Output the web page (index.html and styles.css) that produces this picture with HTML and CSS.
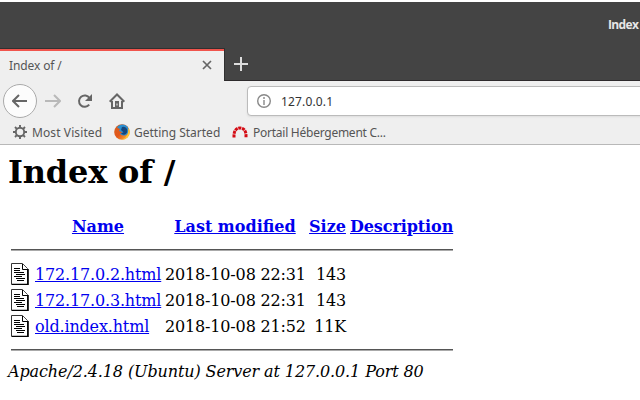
FILE: index.html
```html
<!DOCTYPE html>
<html lang="en">
<head>
<meta charset="utf-8">
<title>Index of /</title>
<link rel="stylesheet" href="styles.css">
</head>
<body>
<svg width="0" height="0" class="defs">
  <symbol id="doc" viewBox="0 0 20 22">
    <path d="M.5.5h11l5 5v16H.5z" fill="#fff" stroke="#333"/>
    <path d="M17 6v15.500H1" fill="none" stroke="#000" stroke-width="1.600"/>
    <path d="M11.500 1v5.500H17" fill="#fff" stroke="#000"/>
    <path d="M3 5.500h6M3 7.500h6M3 9.500h10M5 11.500h9M3 13.500h8M5 15.500h9M6 17.500h7" stroke="#000"/>
  </symbol>
</svg>
<header class="titlebar"><span>Index</span></header>
<div class="tabs">
  <div class="tab">
    <span class="tab-label">Index of /</span>
    <svg class="close" width="10" height="10" viewBox="0 0 10 10"><path d="M1 1l8 8M9 1L1 9"/></svg>
  </div>
  <svg class="plus" width="14" height="14" viewBox="0 0 14 14"><path d="M7 0v14M0 7h14"/></svg>
</div>
<nav class="chrome">
  <div class="toolbar">
    <div class="back"><svg width="16" height="14" viewBox="0 0 16 14"><path d="M15 7H1.500M7 1L1 7l6 6"/></svg></div>
    <svg class="forward" width="16" height="14" viewBox="0 0 16 14"><path d="M0 7h14.500M9 1l6 6-6 6"/></svg>
    <svg class="reload" width="16" height="16" viewBox="0 0 16 16"><path d="M12.200 11.700A5.700 5.700 0 1 1 12.500 5"/><path class="solid" d="M15 1v7H8z"/></svg>
    <svg class="home" width="16" height="16" viewBox="0 0 16 16"><path d="M.7 8.700L8 1.500l7.300 7.200M3 8v6.900h10V8"/><path class="solid" d="M6 8h4v7H6z"/><path class="knob" d="M8 10.500v2"/></svg>
    <div class="url">
      <svg width="14" height="14" viewBox="0 0 14 14"><circle cx="7" cy="7" r="6.300"/><path d="M7 6v5M7 3v2"/></svg>
      <span>127.0.0.1</span>
    </div>
  </div>
  <div class="bookmarks">
    <svg class="gear" width="14" height="14" viewBox="0 0 14 14"><circle cx="7" cy="7" r="4.200"/><path d="M7 0v2.500M7 11.500V14M0 7h2.500M11.500 7H14M2 2l1.800 1.800M10.200 10.200L12 12M2 12l1.800-1.800M10.200 3.800L12 2"/></svg>
    <span class="visited">Most Visited</span>
    <svg class="fox" width="16" height="16" viewBox="0 0 16 16">
      <defs><linearGradient id="flame" x1="0" y1="0" x2="1" y2="1"><stop offset="0" stop-color="#d8601e"/><stop offset=".5" stop-color="#e2571a"/><stop offset="1" stop-color="#ffc53d"/></linearGradient></defs>
      <circle cx="8" cy="8" r="7.800" fill="url(#flame)"/>
      <path d="M3 3.500Q5 .3 9 .4q4 .4 5.500 4Q15.500 10 11 11.500 7 12 6 9.500l2.500-1.200L5 7l1-2z" fill="#2a8fd0"/>
      <path d="M8 3q3-1 5 2 1 4-2 5.500-3 .5-4-1l2.500-1.300L7 6z" fill="#16467c"/>
      <path d="M14 3.500q3 4 .8 8Q12.500 15.500 8 15.500q4-1.500 5.500-5 1.200-3.500.5-7z" fill="#ffc735"/>
    </svg>
    <span class="started">Getting Started</span>
    <svg class="arc" width="16" height="12" viewBox="0 0 16 12"><path d="M2 11.500V9C2.200 4.500 4.500 2 8 2s5.800 2.500 6 7v2.500" fill="none" stroke="#d40b14" stroke-width="3" stroke-dasharray="3 .7"/></svg>
    <span class="portal">Portail Hébergement C...</span>
  </div>
</nav>
<main>
  <h1>Index of /</h1>
  <table>
    <colgroup><col class="c-icon"><col class="c-name"><col class="c-date"><col class="c-size"><col class="c-desc"></colgroup>
    <tr><th class="icon"></th><th><a href="#">Name</a></th><th><a href="#">Last modified</a></th><th><a href="#">Size</a></th><th class="desc"><a href="#">Description</a></th></tr>
    <tr><th colspan="5"><hr></th></tr>
    <tr><td class="icon"><svg width="20" height="22"><use href="#doc"/></svg></td><td><a href="#">172.17.0.2.html</a></td><td class="right">2018-10-08 22:31</td><td class="right">143</td><td></td></tr>
    <tr><td class="icon"><svg width="20" height="22"><use href="#doc"/></svg></td><td><a href="#">172.17.0.3.html</a></td><td class="right">2018-10-08 22:31</td><td class="right">143</td><td></td></tr>
    <tr><td class="icon"><svg width="20" height="22"><use href="#doc"/></svg></td><td><a href="#">old.index.html</a></td><td class="right">2018-10-08 21:52</td><td class="right">11K</td><td></td></tr>
    <tr><th colspan="5"><hr></th></tr>
  </table>
  <address>Apache/2.4.18 (Ubuntu) Server at 127.0.0.1 Port 80</address>
</main>
</body>
</html>
```
FILE: styles.css
```css
* { box-sizing: border-box; }
body { margin: 0; padding-top: 2px; height: 400px; background: #fff; overflow: hidden; font: 16px "DejaVu Serif", serif; color: #000; }
svg { display: block; flex: none; fill: none; }
.defs { display: none; }
.titlebar { height: 46px; background: #444; color: #e6e6e6; font: bold 12px/46px "Open Sans", sans-serif; padding-left: 608px; white-space: nowrap; letter-spacing: -.65px; }
.tabs { display: flex; height: 33px; background: #444; border-top: 1px solid #444; border-bottom: 1px solid #2d2a2c; }
.tab { display: flex; align-items: center; justify-content: space-between; width: 225px; height: 33px; margin-top: -1px; padding: 0 12px 0 9px; border-top: 1px solid #303030; border-right: 1px solid #303030; background: #efefef; box-shadow: inset 0 2px #f0544c; font: 12px "Noto Sans", sans-serif; color: #555; }
.tab-label { letter-spacing: -.12px; }
.close { stroke: #666; stroke-width: 1.7; }
.plus { margin: 8px 0 0 9px; stroke: #ddd; stroke-width: 2; }
.chrome { height: 64px; background: #efefef; border-bottom: 1px solid #b8b8b8; font-family: "Noto Sans", sans-serif; }
.toolbar { display: flex; align-items: center; height: 40px; padding-left: 3px; stroke: #666; stroke-width: 2; }
.back { display: flex; align-items: center; justify-content: center; flex: none; width: 34px; height: 34px; border: 1px solid #aaa; border-radius: 50%; background: #fcfcfc; }
.forward { margin-left: 8px; stroke: #b9b9b9; }
.reload { margin-left: 16px; }
.home { margin-left: 16px; }
.solid { fill: #666; stroke: none; }
.knob { stroke: #efefef; stroke-width: 1; }
.url { display: flex; align-items: center; gap: 10px; margin-left: 122px; width: 400px; flex: none; height: 30px; padding-left: 9px; border: 1px solid #bbb; border-radius: 4px; background: #fff; font-size: 12px; color: #333; letter-spacing: .15px; box-shadow: 0 1px 2px #ddd; }
.url svg { stroke: #888; stroke-width: 1.4; }
.bookmarks { display: flex; align-items: center; height: 22px; padding-left: 13px; font-size: 12px; color: #555; white-space: nowrap; }
.bookmarks span { flex: none; }
.gear { stroke: #666; stroke-width: 1.9; margin-right: 5px; }
.visited { width: 82px; letter-spacing: .1px; }
.fox { margin-right: 4px; }
.started { width: 98px; }
.arc { margin-right: 5px; }
.portal { letter-spacing: -.25px; }
main { padding: 8px; }
h1 { margin: 0 0 21px; font-size: 32px; line-height: 38px; letter-spacing: -.18px; }
table { table-layout: fixed; width: 448px; border-spacing: 2px; border-collapse: separate; line-height: 19px; white-space: nowrap; }
.c-icon { width: 22px; }
.c-name { width: 128px; }
.c-date { width: 142px; }
.c-size { width: 39px; }
.c-desc { width: 105px; }
td, th { padding: 1px; }
td { letter-spacing: -.16px; }
.desc { letter-spacing: -.1px; }
.icon { height: 24px; }
.right { text-align: right; }
a { color: #00e; text-decoration: underline; }
hr { height: 2px; margin: 8px 0; border: 0; border-top: 1px solid #555; border-bottom: 1px solid #aaa; }
address { line-height: 19px; font-style: italic; letter-spacing: -.11px; }
```
